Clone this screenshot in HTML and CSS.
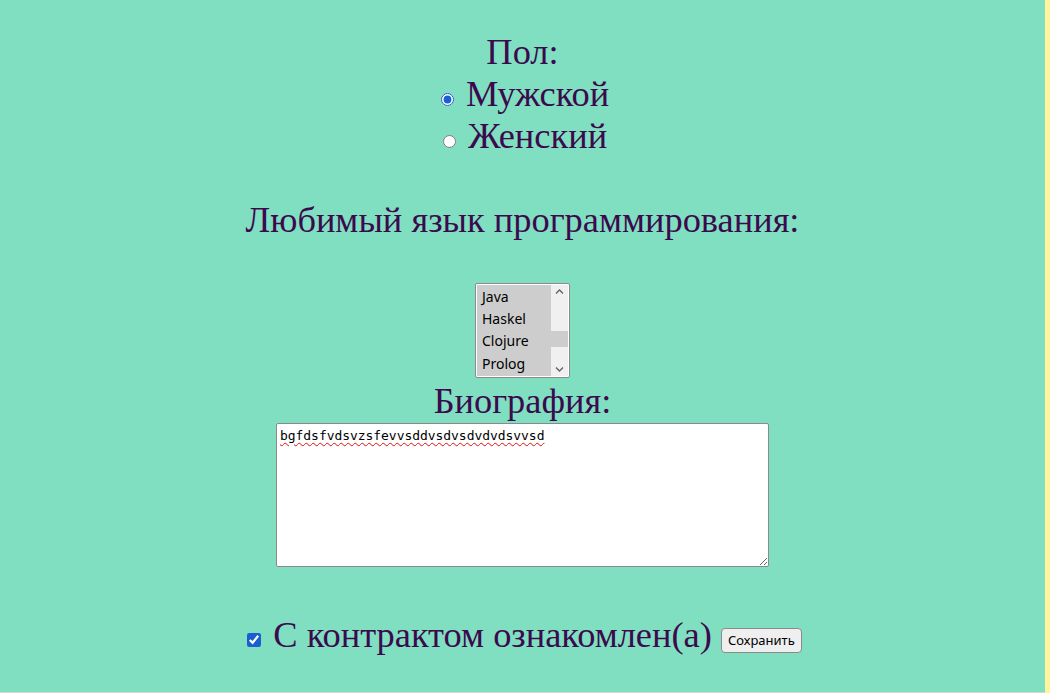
FILE: index.html
```html
<!DOCTYPE html>
<html lang="ru">
<head>
<meta charset="utf-8">
<link rel="stylesheet" href="styles.css">
</head>
<body>
<div class="page">
  <form class="form">
    <div class="group">
      <div class="line">Пол:</div>
      <div class="line"><label><input class="radio" type="radio" name="sex" checked> Мужской</label></div>
      <div class="line"><label><input class="radio" type="radio" name="sex"> Женский</label></div>
    </div>
    <div class="line lang-title">Любимый язык программирования:</div>
    <div class="listbox" role="listbox" aria-multiselectable="true">
      <div class="options">
        <div class="opt" role="option" aria-selected="true">Java</div>
        <div class="opt" role="option" aria-selected="true">Haskel</div>
        <div class="opt" role="option" aria-selected="true">Clojure</div>
        <div class="opt" role="option" aria-selected="true">Prolog</div>
      </div>
      <div class="scrollbar">
        <svg class="arrow" width="17" height="14" viewBox="0 0 17 14"><path d="M5 8.5 L8.5 5 L12 8.5" fill="none" stroke="#606060" stroke-width="1.3"/></svg>
        <div class="track"><div class="thumb"></div></div>
        <svg class="arrow" width="17" height="14" viewBox="0 0 17 14"><path d="M5 5.5 L8.5 9 L12 5.5" fill="none" stroke="#606060" stroke-width="1.3"/></svg>
      </div>
    </div>
    <div class="line bio-title">Биография:</div>
    <textarea class="bio" spellcheck="true">bgfdsfvdsvzsfevvsddvsdvsdvdvdsvvsd</textarea>
    <div class="line agree"><label><input class="check" type="checkbox" checked> С контрактом ознакомлен(а)</label> <button type="button" class="save">Сохранить</button></div>
  </form>
</div>
</body>
</html>
```
FILE: styles.css
```css
html, body {
  margin: 0;
  padding: 0;
}
body {
  background: #fff59d;
  height: 693px;
  overflow: hidden;
}
.page {
  background: #80dfc0;
  margin-right: 5px;
  height: 692px;
  border-bottom: 1px solid #cfd8d4;
  font-family: "Liberation Serif", "Times New Roman", serif;
  color: #3b0a4e;
}
.form {
  display: flex;
  flex-direction: column;
  align-items: center;
  padding-top: 31px;
}
.line {
  font-size: 36.4px;
  line-height: 42px;
  text-align: center;
}
.group {
  display: flex;
  flex-direction: column;
  align-items: center;
}
.radio {
  width: 13px;
  height: 13px;
  margin: 3px 3px 0 5px;
  accent-color: #1a5fd0;
}
.lang-title {
  margin-top: 42px;
}
.listbox {
  margin-top: 42px;
  width: 95px;
  height: 95px;
  box-sizing: border-box;
  border: 1px solid #8a8a8a;
  border-radius: 2px;
  background: #ffffff;
  padding: 1px;
  display: flex;
}
.options {
  flex: 1;
  background: #cdcdcd;
  padding-top: 0.5px;
  font-family: "Noto Sans", "Liberation Sans", sans-serif;
  font-size: 14px;
  color: #000000;
}
.opt {
  height: 22.4px;
  line-height: 22px;
  padding-left: 5px;
}
.scrollbar {
  width: 17px;
  background: #f0f0f0;
  display: flex;
  flex-direction: column;
}
.arrow {
  display: block;
  flex: none;
}
.track {
  flex: 1;
  display: flex;
  flex-direction: column;
  justify-content: flex-end;
  padding-bottom: 15px;
}
.thumb {
  height: 16px;
  background: #cdcdcd;
}
.bio-title {
  margin-top: 2px;
}
.bio {
  margin-top: 1px;
  width: 493px;
  height: 144px;
  box-sizing: border-box;
  border: 1px solid #8a8a8a;
  border-radius: 2px;
  padding: 3px 4px 2px 3px;
  font-family: "DejaVu Sans Mono", monospace;
  font-size: 13px;
  letter-spacing: -0.05px;
  line-height: 17px;
  color: #000000;
  text-decoration: underline wavy #e01010;
  text-decoration-thickness: 1.1px;
  text-underline-offset: 2px;
}
.agree {
  margin-top: 47px;
}
.check {
  width: 14px;
  height: 14px;
  margin: 3px 3px 3px 4px;
  accent-color: #1a5fd0;
}
.save {
  height: 25px;
  padding: 0 6px;
  border: 1px solid #8a8a8a;
  border-radius: 4px;
  background: #efefef;
  color: #000000;
  font-family: "Noto Sans", "Liberation Sans", sans-serif;
  font-size: 13px;
  vertical-align: 2px;
}
```
